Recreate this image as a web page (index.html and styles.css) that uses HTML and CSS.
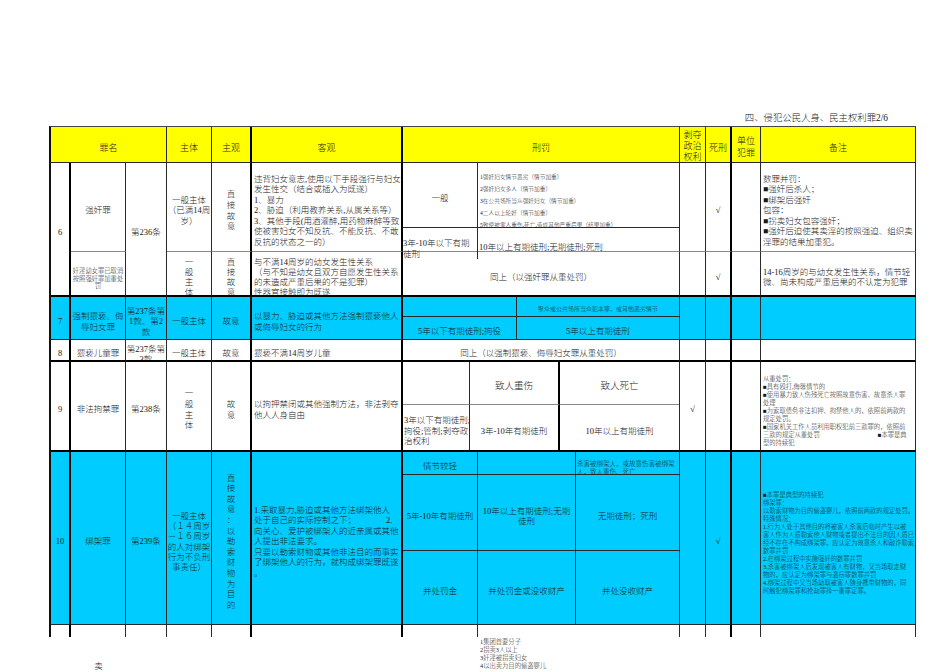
FILE: index.html
```html
<!DOCTYPE html>
<html lang="zh-CN">
<head>
<meta charset="utf-8">
<title>侵犯公民人身、民主权利罪</title>
<link rel="stylesheet" href="styles.css">
</head>
<body>
<div class="page">
  <div class="title">四、侵犯公民人身、民主权利罪2/6</div>
  <div class="sheet">
    <div class="row hdr">
      <div class="c c3">罪名</div>
      <div class="c">主体</div>
      <div class="c tr">主观</div>
      <div class="c tr">客观</div>
      <div class="c">刑罚</div>
      <div class="c h3">剥夺<br>政治<br>权利</div>
      <div class="c tr">死刑</div>
      <div class="c h2">单位<br>犯罪</div>
      <div class="c">备注</div>
    </div>

    <div class="row">
      <div class="c r2 tr tb">6</div>
      <div class="c gb">强奸罪</div>
      <div class="c r2 tb">第236条</div>
      <div class="c gb">一般主体<br>（已满14周<br>岁）</div>
      <div class="c gb tr vt">直<br>接<br>故<br>意</div>
      <div class="c gb tr l">违背妇女意志,使用以下手段强行与妇女<br>发生性交（结合或插入为既遂）<br>1、暴力<br>2、胁迫（利用教养关系,从属关系等）<br>3、其他手段(用酒灌醉,用药物麻醉等致<br>使被害妇女不知反抗、不能反抗、不敢<br>反抗的状态之一的）</div>
      <div class="c gb pen p6 vis">
        <div class="ic">一般</div>
        <div class="ic nr l list6">1强奸妇女情节恶劣（情节加重）<br>2强奸妇女多人（情节加重）<br>3在公共场所当众强奸妇女（情节加重）<br>4二人以上轮奸（情节加重）<br>5致使被害人重伤,死亡,造成其他严重后果（结果加重）</div>
        <div class="ic nb l vis low">3年-10年以下有期<br>徒刑</div>
        <div class="ic nb nr l">10年以上有期徒刑;无期徒刑;死刑</div>
      </div>
      <div class="c gb"></div>
      <div class="c gb tr">√</div>
      <div class="c gb"></div>
      <div class="c gb l">数罪并罚：<br>■强奸后杀人；<br>■绑架后强奸<br>包容：<br>■拐卖妇女包容强奸；<br>■强奸后迫使其卖淫的按照强迫、组织卖<br>淫罪的结果加重犯。</div>
    </div>

    <div class="row">
      <div class="c tb tiny">奸淫幼女罪已取消<br>按照强奸罪加重处<br>罚</div>
      <div class="c tb vt10">一<br>般<br>主<br>体</div>
      <div class="c tb tr vt10">直<br>接<br>故<br>意</div>
      <div class="c tb tr l lh10">与不满14周岁的幼女发生性关系<br>（与不知是幼女且双方自愿发生性关系<br>的未造成严重后果的不是犯罪）<br>性器官接触即为既遂</div>
      <div class="c tb">同上（以强奸罪从重处罚）</div>
      <div class="c tb"></div>
      <div class="c tb tr">√</div>
      <div class="c tb"></div>
      <div class="c tb l">14-16周岁的与幼女发生性关系，情节轻<br>微、尚未构成严重后果的不认定为犯罪</div>
    </div>

    <div class="row blue">
      <div class="c tr">7</div>
      <div class="c">强制猥亵、侮<br>辱妇女罪</div>
      <div class="c">第237条第<br>1款、第2<br>款</div>
      <div class="c">一般主体</div>
      <div class="c tr">故意</div>
      <div class="c tr l">以暴力、胁迫或其他方法强制猥亵他人<br>或侮辱妇女的行为</div>
      <div class="c pen p7">
        <div class="ic"></div>
        <div class="ic nr tiny">聚众或公共场所当众犯本罪，或其他恶劣情节</div>
        <div class="ic nb">5年以下有期徒刑;拘役</div>
        <div class="ic nb nr">5年以上有期徒刑</div>
      </div>
      <div class="c"></div>
      <div class="c tr"></div>
      <div class="c"></div>
      <div class="c"></div>
    </div>

    <div class="row">
      <div class="c tr tb">8</div>
      <div class="c tb">猥亵儿童罪</div>
      <div class="c tb lh10">第237条第<br>3款</div>
      <div class="c tb">一般主体</div>
      <div class="c tb tr">故意</div>
      <div class="c tb tr l">猥亵不满14周岁儿童</div>
      <div class="c tb">同上（以强制猥亵、侮辱妇女罪从重处罚）</div>
      <div class="c tb"></div>
      <div class="c tb tr"></div>
      <div class="c tb"></div>
      <div class="c tb"></div>
    </div>

    <div class="row">
      <div class="c tr tb">9</div>
      <div class="c tb">非法拘禁罪</div>
      <div class="c tb">第238条</div>
      <div class="c tb vt">一<br>般<br>主<br>体</div>
      <div class="c tb tr vt">故<br>意</div>
      <div class="c tb tr l">以拘押禁闭或其他强制方法，非法剥夺<br>他人人身自由</div>
      <div class="c tb pen p9">
        <div class="ic gbb"></div>
        <div class="ic gbb tk big">致人重伤</div>
        <div class="ic gbb nr big">致人死亡</div>
        <div class="ic nb l">3年以下有期徒刑;<br>拘役;管制;剥夺政<br>治权利</div>
        <div class="ic nb tk">3年-10年有期徒刑</div>
        <div class="ic nb nr">10年以上有期徒刑</div>
      </div>
      <div class="c tb">√</div>
      <div class="c tb tr"></div>
      <div class="c tb"></div>
      <div class="c tb l rem"><p class="tx">从重处罚：<br>■具有殴打,侮辱情节的<br>■使用暴力致人伤残死亡按照故意伤害、故意杀人罪<br>处理<br>■为索取债务非法扣押、拘禁他人的，依照前两款的<br>规定处罚。<br>■国家机关工作人员利用职权犯前三款罪的，依照前<br>三款的规定从重处罚<span class="gap58"></span>■本罪是典<br>型的持续犯</p></div>
    </div>

    <div class="row blue">
      <div class="c tr">10</div>
      <div class="c">绑架罪</div>
      <div class="c">第239条</div>
      <div class="c lh103">一般主体<br>（１４周岁<br>－１６周岁<br>的人对绑架<br>行为不负刑<br>事责任）</div>
      <div class="c tr vt">直<br>接<br>故<br>意<br>：<br>以<br>勒<br>索<br>财<br>物<br>为<br>目<br>的</div>
      <div class="c tr l"><p class="tx">1.采取暴力,胁迫或其他方法绑架他人<br>处于自己的实际控制之下；<span class="gap30"></span>2.<br>向关心、爱护被绑架人的近亲属或其他<br>人提出非法要求。<br>只要以勒索财物或其他非法目的而事实<br>了绑架他人的行为，就构成绑架罪既遂<br>。</p></div>
      <div class="c pen p10">
        <div class="ic">情节较轻</div>
        <div class="ic"></div>
        <div class="ic nr l small10">杀害被绑架人，或故意伤害被绑架<br>人，致人重伤、死亡</div>
        <div class="ic">5年-10年有期徒刑</div>
        <div class="ic">10年以上有期徒刑;无期<br>徒刑</div>
        <div class="ic nr">无期徒刑；死刑</div>
        <div class="ic nb">并处罚金</div>
        <div class="ic nb">并处罚金或没收财产</div>
        <div class="ic nb nr">并处没收财产</div>
      </div>
      <div class="c"></div>
      <div class="c tr">√</div>
      <div class="c"></div>
      <div class="c l rem"><p class="tx">■本罪是典型的持续犯<br>绑架罪：<br>以勒索财物为目的偷盗婴儿，依照前两款的规定处罚。<br>特殊情况：<br>1.行为人处于其他目的将被害人杀害后临时产生以被<br>害人作为人质勒索他人财物或者提出不法目的因人质已<br>经不存在不构成绑架罪，应认定为故意杀人和敲诈勒索<br>数罪并罚<br>2.在绑架过程中实施强奸的数罪并罚<br>3.杀害被绑架人后发现被害人有财物，又当场取走财<br>物的，应认定为绑架罪与盗窃罪数罪并罚<br>4.绑架过程中又当场劫取被害人随身携带财物的，同<br>时触犯绑架罪和抢劫罪择一重罪定罪。</p></div>
    </div>

    <div class="row">
      <div class="c tr nb"></div>
      <div class="c nb"></div>
      <div class="c nb"></div>
      <div class="c nb"></div>
      <div class="c tr nb"></div>
      <div class="c tr nb"></div>
      <div class="c nb pen p11">
        <div class="ic nb"></div>
        <div class="ic nb nr"></div>
      </div>
      <div class="c nb"></div>
      <div class="c tr nb"></div>
      <div class="c nb"></div>
      <div class="c nb"></div>
    </div>
  </div>

  <div class="tail">
    <div class="t-sell">卖</div>
    <div class="t-list">1集团首要分子<br>2拐卖3人以上<br>3奸淫被拐卖妇女<br>4以出卖为目的偷盗婴儿</div>
  </div>
</div>
</body>
</html>
```

FILE: styles.css
```css
* { box-sizing: border-box; }
html, body { margin: 0; padding: 0; background: #ffffff; }
body {
  font-family: "Liberation Serif", "Noto Sans CJK SC", serif;
  font-weight: 300;
  font-size: 8.5px;
  line-height: 10.5px;
  color: #1a1a1a;
}
.page { width: 867px; margin-left: 49px; padding-top: 112px; }
.title {
  height: 14px;
  padding-right: 28px;
  text-align: right;
  font-size: 9.4px;
  line-height: 12px;
}
.sheet, .tail {
  display: grid;
  grid-template-columns: 20px 55px 41px 45px 40px 151px 277px 26px 26px 29px 155px;
}
.sheet {
  grid-template-rows: 36px 89px 45px 43px 22px 90px 173px 12px;
  border-left: 2px solid #111;
  border-top: 1px solid #444;
}
.row { display: contents; }
.tx { margin: 0; white-space: nowrap; }

.c {
  display: flex;
  align-items: center;
  justify-content: center;
  text-align: center;
  white-space: nowrap;
  overflow: hidden;
  padding-top: 7px;
  border-right: 1px solid #2a2a2a;
  border-bottom: 1px solid #2a2a2a;
}
.l { justify-content: flex-start; text-align: left; padding-left: 2px; }
.tr { border-right: 2px solid #000; }
.tb { border-bottom: 2px solid #000; }
.gb { border-bottom-color: #8a8a8a; }
.nb { border-bottom: none; }
.nr { border-right: none; }
.r2 { grid-row: span 2; }
.c3 { grid-column: span 3; }
.vis { overflow: visible; }

.hdr > .c { background: #ffff00; font-size: 9px; }
.hdr > .h3 { padding-top: 3px; line-height: 11px; }
.hdr > .h2 { padding-top: 6px; line-height: 11.5px; }
.blue > .c { background: #00ccff; }

.vt { line-height: 10.6px; }
.vt10, .lh10 { line-height: 10px; }
.lh103 { line-height: 10.3px; }
.tiny { font-size: 6.3px; line-height: 7.5px; padding-top: 10px; }

.pen {
  display: grid;
  padding: 0;
  align-items: stretch;
  justify-items: stretch;
  align-content: stretch;
  justify-content: stretch;
}
.p6 { grid-template-columns: 75px 1fr; grid-template-rows: 65px 1fr; }
.p7 { grid-template-columns: 114px 1fr; grid-template-rows: 20px 1fr; }
.p9 { grid-template-columns: 67px 90px 1fr; grid-template-rows: 43px 1fr; }
.p10 { grid-template-columns: 75px 98px 1fr; grid-template-rows: 23px 76px 1fr; }
.p11 { grid-template-columns: 75px 1fr; }

.ic {
  display: flex;
  align-items: center;
  justify-content: center;
  text-align: center;
  white-space: nowrap;
  overflow: hidden;
  padding-top: 7px;
  border-right: 1px solid #2a2a2a;
  border-bottom: 1px solid #2a2a2a;
}
.ic.l { justify-content: flex-start; text-align: left; padding-left: 1px; }
.ic.nb { border-bottom: none; }
.ic.nr { border-right: none; }
.ic.gbb { border-bottom-color: #8a8a8a; }
.ic.tk { border-right: 2px solid #000; }
.ic.big { font-size: 9.5px; }
.ic.vis { overflow: visible; }
.ic.low { padding-top: 10px; padding-left: 0; }
.ic.list6 { font-size: 5.7px; line-height: 12px; padding-top: 12px; padding-left: 2px; }
.ic.tiny { font-size: 6px; padding-top: 7px; }
.ic.small10 { font-size: 6.5px; line-height: 8px; align-items: flex-start; padding-top: 8px; }

.rem { font-size: 6.3px; line-height: 8px; padding-top: 10px; }
.gap58 { display: inline-block; width: 58px; }
.gap30 { display: inline-block; width: 30px; }

.tail { height: 35px; margin-left: 2px; }
.t-sell { grid-column: 2; padding-top: 24px; text-align: center; }
.t-list {
  grid-column: 7;
  padding-left: 77px;
  padding-top: 0.5px;
  font-size: 6.3px;
  line-height: 8.3px;
  white-space: nowrap;
}
```
